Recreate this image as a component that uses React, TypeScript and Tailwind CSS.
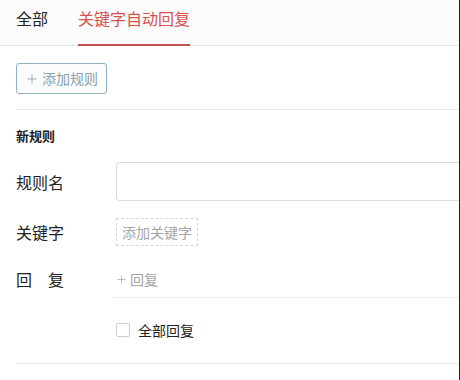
import { Plus } from 'lucide-react';

export default function App() {
  return (
    <div
      className="w-[460px] h-[380px] bg-white overflow-hidden border-r border-[#222] relative"
      style={{ fontFamily: '"Noto Sans CJK SC", "Noto Sans", sans-serif' }}
    >
      {/* tabs */}
      <div className="h-[46px] bg-[#fcfcfc] border-b border-[#e6e6e6] flex items-stretch pl-4">
        <div className="flex items-center text-[16px] text-[#222] pb-[10px] mr-[30px]">全部</div>
        <div className="flex items-center text-[16px] text-[#d9504f] pb-[8px] border-b-2 border-[#bf5350] -mb-px">
          关键字自动回复
        </div>
      </div>

      <div className="pl-4">
        <div className="pt-[17px] pb-[15px] border-b border-[#e8e8e8]">
          <button className="w-[91px] h-[31px] flex items-center justify-center gap-[3px] rounded-[3px] border border-[#8fb2bf] bg-[#fbfdfd] text-[14px] text-[#87a0ab]">
            <Plus size={14} strokeWidth={1.5} />
            添加规则
          </button>
        </div>

        <div className="pt-[17px] text-[13px] font-bold text-[#222] leading-[18px]">新规则</div>

        <div className="mt-[17px] flex items-center h-[39px]">
          <div className="w-[100px] text-[16px] text-[#222]">规则名</div>
          <div className="flex-1 h-[39px] border border-[#dcdcdc] rounded-l-[4px] border-r-0" />
        </div>

        <div className="mt-[17px] flex items-center h-[28px]">
          <div className="w-[100px] text-[16px] text-[#222]">关键字</div>
          <div className="h-[28px] px-[5px] flex items-center border border-dashed border-[#d6d6d6] text-[14px] text-[#a5a5a5]">
            添加关键字
          </div>
        </div>

        <div className="mt-[23px] flex items-start">
          <div className="w-[100px] text-[16px] text-[#222] flex gap-[16px] leading-[20px]">
            <span>回</span>
            <span>复</span>
          </div>
          <div className="flex-1 -ml-[3px] border-b border-[#ebebeb] pb-[8px] pl-[2px] flex items-center text-[14px] text-[#a5a5a5] leading-[20px]">
            <Plus size={13} strokeWidth={1.3} className="mr-[2px]" />
            回复
          </div>
        </div>

        <div className="mt-[24px] flex items-center ml-[100px] h-[16px]">
          <div className="w-[14px] h-[14px] border border-[#cfcfcf] rounded-[2px] bg-white" />
          <span className="ml-[8px] text-[14px] text-[#222]">全部回复</span>
        </div>

        <div className="mt-[25px] border-b border-[#e8e8e8]" />
      </div>
    </div>
  );
}
